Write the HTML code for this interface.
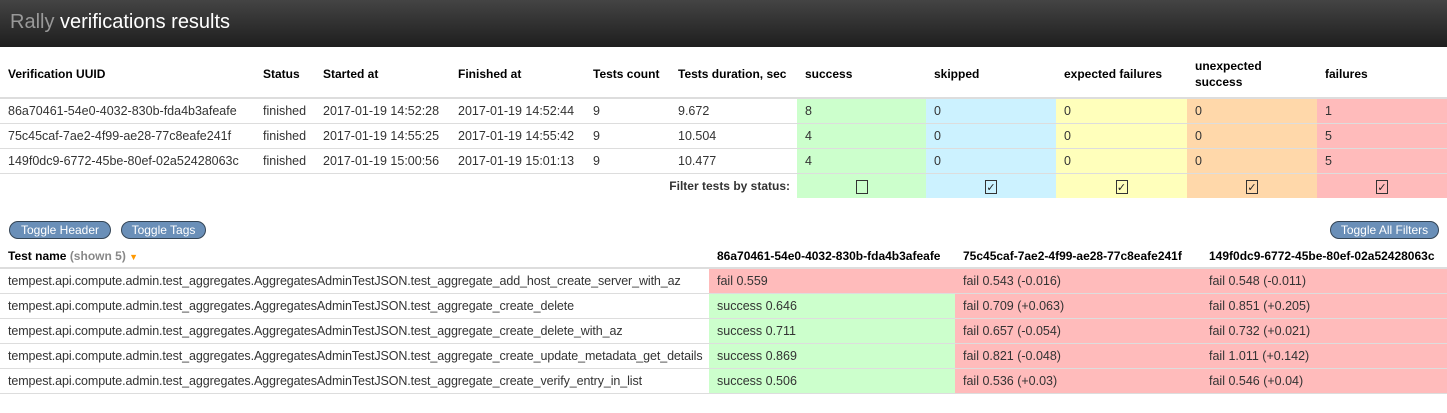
<!DOCTYPE html><html><head><style>
body{margin:0;width:1447px;height:413px;overflow:hidden;font-family:"Liberation Sans",Arial,sans-serif;font-size:12px;color:#222;background:#fff;position:relative}
.hd{position:absolute;left:0;top:0;width:1447px;height:47px;background:linear-gradient(#444,#1e1e1e)}
.hd span{position:absolute;top:11px;font-size:20px}
.c{position:absolute;box-sizing:border-box;padding-left:8px;white-space:nowrap}
.n{font-size:12.5px}
.b{font-weight:bold;color:#000}
.btn{position:absolute;height:18px;border:1px solid #345;border-radius:9px;background:#6a8fb8;color:#fff;font-size:12px;line-height:16px;text-align:center;box-sizing:border-box}
.hl{position:absolute;left:0;width:1447px;height:1px;background:#ddd}
.cb{display:inline-block;width:12px;height:14px;border:1px solid #333;font-size:11px;line-height:14px;text-align:center;vertical-align:middle;box-sizing:border-box}
</style></head><body>
<div class="hd"><span style="left:10px;color:#999">Rally</span><span style="left:60px;color:#fff">verifications results</span></div>
<script>
var b=document.body;function el(c,s,h){var d=document.createElement('div');d.className=c;d.style.cssText=s;d.innerHTML=h||'';b.appendChild(d);return d}
var xs=[0,255,315,450,585,670,797,926,1056,1187,1317,1447];
var heads=['Verification UUID','Status','Started at','Finished at','Tests count','Tests duration, sec','success','skipped','expected failures','unexpected<br>success','failures'];
var bg=['#ccffcc','#ccf2ff','#ffffbb','#ffd8aa','#ffbbbb'];
for(var i=0;i<11;i++){el('c b','left:'+xs[i]+'px;top:'+(i==9?58:66)+'px;line-height:16px;font-size:12px',heads[i]);}
el('hl','top:97px;height:2px;background:#ddd');
var rows=[['86a70461-54e0-4032-830b-fda4b3afeafe','finished','2017-01-19 14:52:28','2017-01-19 14:52:44','9','9.672','8','0','0','0','1'],
['75c45caf-7ae2-4f99-ae28-77c8eafe241f','finished','2017-01-19 14:55:25','2017-01-19 14:55:42','9','10.504','4','0','0','0','5'],
['149f0dc9-6772-45be-80ef-02a52428063c','finished','2017-01-19 15:00:56','2017-01-19 15:01:13','9','10.477','4','0','0','0','5']];
for(var r=0;r<3;r++){var y=99+r*25;for(var i=0;i<11;i++){el('c n','left:'+xs[i]+'px;top:'+y+'px;width:'+(xs[i+1]-xs[i])+'px;height:25px;line-height:25px;color:#333;'+(i>=6?'background:'+bg[i-6]:''),rows[r][i]);}el('hl','top:'+(y+24)+'px;z-index:2');}
el('c b','left:600px;top:174px;width:190px;text-align:right;line-height:24px;color:#333','Filter tests by status:');
for(var i=0;i<5;i++){el('c','left:'+xs[i+6]+'px;top:174px;width:'+(xs[i+7]-xs[i+6])+'px;height:24px;padding:0;text-align:center;line-height:24px;background:'+bg[i],'<span class="cb">'+(i?'✓':'')+'</span>');}
el('btn','left:9px;top:221px;width:102px','Toggle Header');
el('btn','left:121px;top:221px;width:85px','Toggle Tags');
el('btn','left:1330px;top:221px;width:109px','Toggle All Filters');
el('c b','left:0;top:248px;line-height:16px','Test name <span style="color:#888">(shown 5)</span> <span style="color:#f90;font-size:9px">▼</span>');
var x2=[0,709,955,1201,1447];
var ids=['86a70461-54e0-4032-830b-fda4b3afeafe','75c45caf-7ae2-4f99-ae28-77c8eafe241f','149f0dc9-6772-45be-80ef-02a52428063c'];
for(var i=0;i<3;i++)el('c b','left:'+x2[i+1]+'px;top:248px;line-height:16px',ids[i]);
el('hl','top:267px;height:2px');
var P='tempest.api.compute.admin.test_aggregates.AggregatesAdminTestJSON.test_aggregate_';
var t=[['add_host_create_server_with_az','fail 0.559','fail 0.543 (-0.016)','fail 0.548 (-0.011)'],
['create_delete','success 0.646','fail 0.709 (+0.063)','fail 0.851 (+0.205)'],
['create_delete_with_az','success 0.711','fail 0.657 (-0.054)','fail 0.732 (+0.021)'],
['create_update_metadata_get_details','success 0.869','fail 0.821 (-0.048)','fail 1.011 (+0.142)'],
['create_verify_entry_in_list','success 0.506','fail 0.536 (+0.03)','fail 0.546 (+0.04)']];
for(var r=0;r<5;r++){var y=269+r*25;for(var i=0;i<4;i++){var v=i?t[r][i]:P+t[r][0];var c=i?(v[0]=='s'?'#ccffcc':'#ffbbbb'):'';el('c n','left:'+x2[i]+'px;top:'+y+'px;width:'+(x2[i+1]-x2[i])+'px;height:25px;line-height:25px;color:#333;overflow:hidden;'+(i==0?'letter-spacing:-0.1px;':'')+(c?'background:'+c:''),v);}el('hl','top:'+(y+24)+'px;z-index:2');}
</script>
</body></html>
